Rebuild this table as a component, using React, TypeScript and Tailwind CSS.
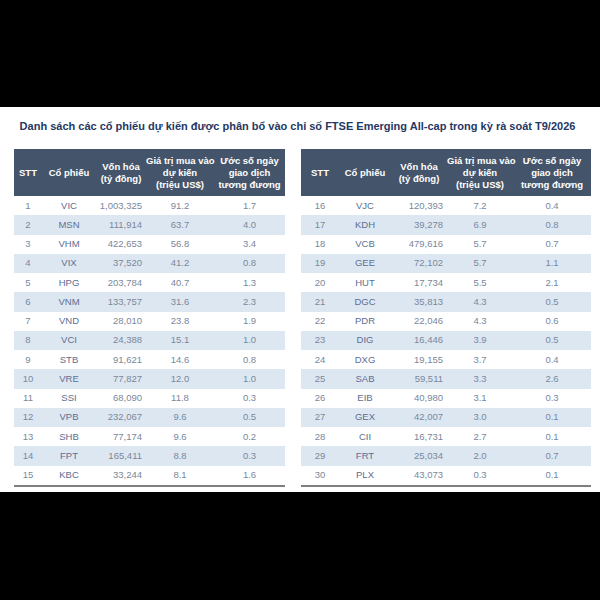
import React from 'react'

type Row = [number, string, string, string, string]

const left: Row[] = [
  [1, 'VIC', '1,003,325', '91.2', '1.7'],
  [2, 'MSN', '111,914', '63.7', '4.0'],
  [3, 'VHM', '422,653', '56.8', '3.4'],
  [4, 'VIX', '37,520', '41.2', '0.8'],
  [5, 'HPG', '203,784', '40.7', '1.3'],
  [6, 'VNM', '133,757', '31.6', '2.3'],
  [7, 'VND', '28,010', '23.8', '1.9'],
  [8, 'VCI', '24,388', '15.1', '1.0'],
  [9, 'STB', '91,621', '14.6', '0.8'],
  [10, 'VRE', '77,827', '12.0', '1.0'],
  [11, 'SSI', '68,090', '11.8', '0.3'],
  [12, 'VPB', '232,067', '9.6', '0.5'],
  [13, 'SHB', '77,174', '9.6', '0.2'],
  [14, 'FPT', '165,411', '8.8', '0.3'],
  [15, 'KBC', '33,244', '8.1', '1.6'],
]

const right: Row[] = [
  [16, 'VJC', '120,393', '7.2', '0.4'],
  [17, 'KDH', '39,278', '6.9', '0.8'],
  [18, 'VCB', '479,616', '5.7', '0.7'],
  [19, 'GEE', '72,102', '5.7', '1.1'],
  [20, 'HUT', '17,734', '5.5', '2.1'],
  [21, 'DGC', '35,813', '4.3', '0.5'],
  [22, 'PDR', '22,046', '4.3', '0.6'],
  [23, 'DIG', '16,446', '3.9', '0.5'],
  [24, 'DXG', '19,155', '3.7', '0.4'],
  [25, 'SAB', '59,511', '3.3', '2.6'],
  [26, 'EIB', '40,980', '3.1', '0.3'],
  [27, 'GEX', '42,007', '3.0', '0.1'],
  [28, 'CII', '16,731', '2.7', '0.1'],
  [29, 'FRT', '25,034', '2.0', '0.7'],
  [30, 'PLX', '43,073', '0.3', '0.1'],
]

// column widths in px: stt, code, cap, buy, days
type Cols = { w: string; cols: [string, string, string, string, string] }

const leftCols: Cols = {
  w: 'w-[271px]',
  cols: ['w-[28px]', 'w-[54px]', 'w-[50px]', 'w-[68px]', 'w-[71px]'],
}
const rightCols: Cols = {
  w: 'w-[290px]',
  cols: ['w-[38px]', 'w-[52px]', 'w-[56px]', 'w-[66px]', 'w-[78px]'],
}

function StockTable({ rows, layout }: { rows: Row[]; layout: Cols }) {
  const [c0, c1, c2, c3, c4] = layout.cols
  return (
    <div className={`${layout.w} border-b-2 border-[#7f7f7f]`}>
      {/* header */}
      <div className="h-[47px] bg-[#44546a] flex items-center text-white font-bold text-[9.5px] leading-[12px] text-center whitespace-nowrap">
        <div className={c0}>STT</div>
        <div className={c1}>Cổ phiếu</div>
        <div className={c2}>
          Vốn hóa
          <br />
          (tỷ đồng)
        </div>
        <div className={c3}>
          Giá trị mua vào
          <br />
          dự kiến
          <br />
          (triệu US$)
        </div>
        <div className={c4}>
          Ước số ngày
          <br />
          giao dịch
          <br />
          tương đương
        </div>
      </div>

      {rows.map((r, i) => (
        <div
          key={r[0]}
          className={`h-[19.27px] flex items-center text-[9.5px] text-[#7a879b] ${
            i % 2 === 1 ? 'bg-[#dde7f2]' : 'bg-white'
          }`}
        >
          <div className={`${c0} text-center`}>{r[0]}</div>
          <div className={`${c1} text-center text-[#5d6e92]`}>{r[1]}</div>
          <div className={`${c2} text-right pr-[4px]`}>{r[2]}</div>
          <div className={`${c3} text-center`}>{r[3]}</div>
          <div className={`${c4} text-center`}>{r[4]}</div>
        </div>
      ))}
    </div>
  )
}

export default function App() {
  return (
    <div className="h-[600px] w-[600px] bg-black flex flex-col font-['Liberation_Sans',Arial,sans-serif]">
      <div className="h-[107px]" />

      <div className="h-[385px] bg-white pt-[11px]">
        <h1 className="h-[16px] leading-[16px] text-center text-[11px] font-bold text-[#1f3864] pr-[5px] whitespace-nowrap">
          Danh sách các cổ phiếu dự kiến được phân bổ vào chỉ số FTSE Emerging All-cap trong kỳ rà soát T9/2026
        </h1>

        <div className="mt-[15px] pl-[14px] flex gap-[16px]">
          <StockTable rows={left} layout={leftCols} />
          <StockTable rows={right} layout={rightCols} />
        </div>
      </div>
    </div>
  )
}
